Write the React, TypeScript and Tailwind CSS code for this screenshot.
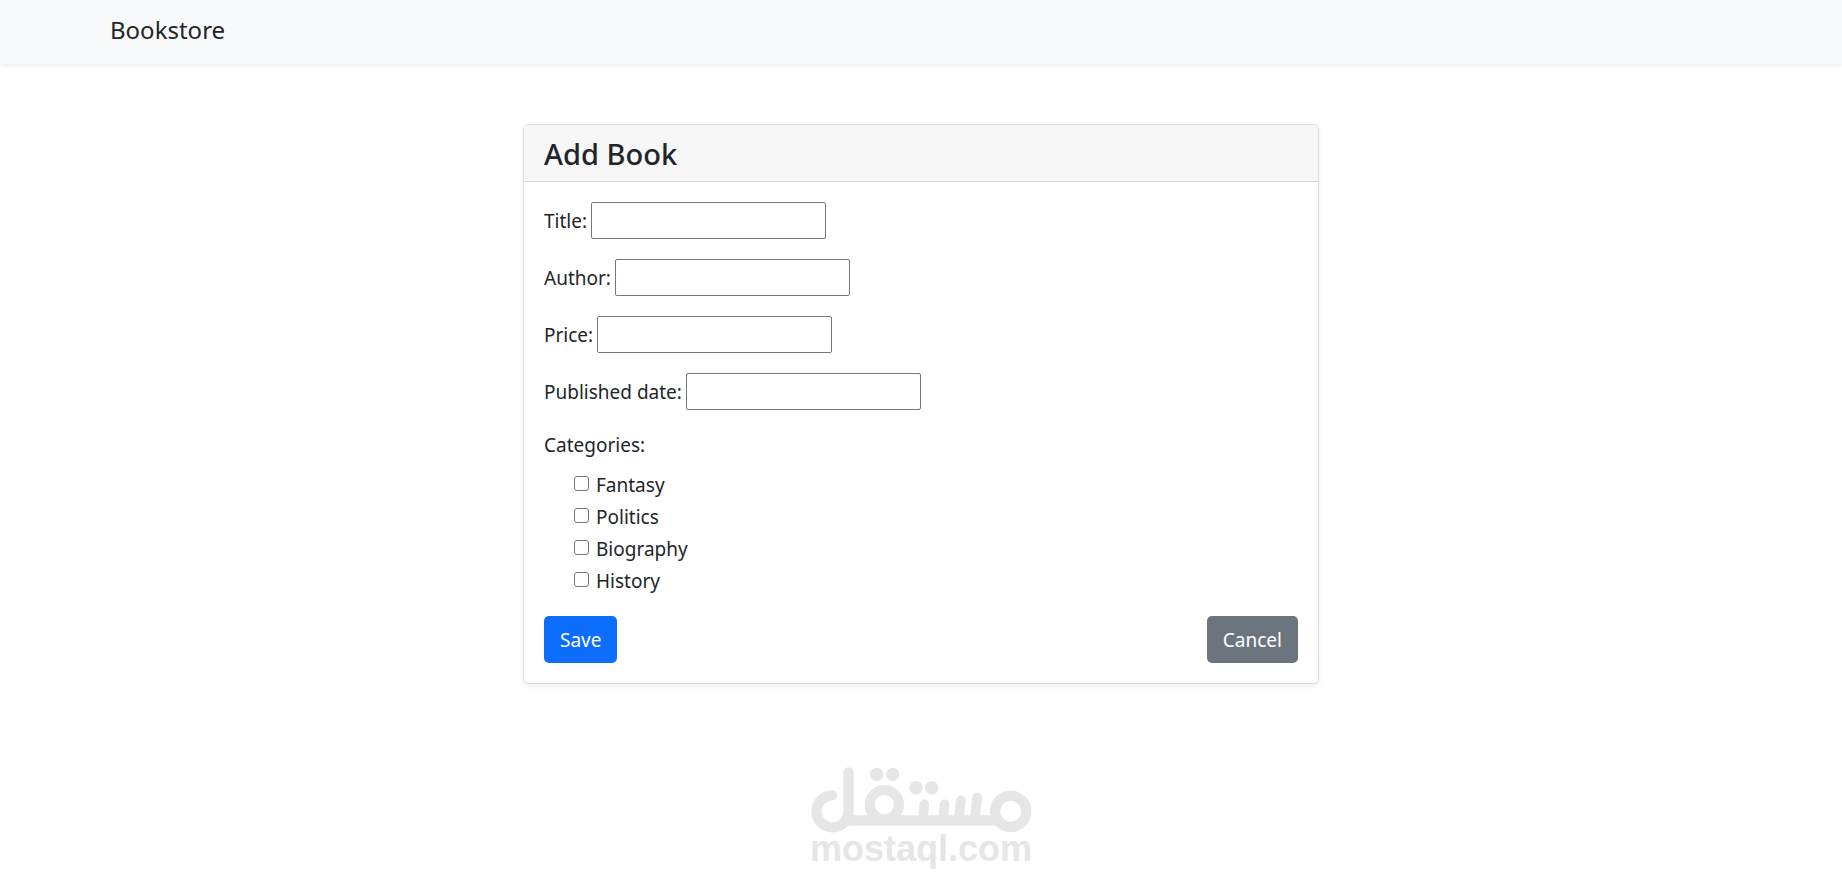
import { useState } from "react";

const fields = [
  { id: "title", label: "Title:" },
  { id: "author", label: "Author:" },
  { id: "price", label: "Price:" },
  { id: "published", label: "Published date:" },
];

const categories = ["Fantasy", "Politics", "Biography", "History"];

function Watermark() {
  return (
    <svg
      viewBox="60 50 663 309"
      className="h-[103px] w-[221px]"
      fill="none"
      stroke="#e6e6e6"
      strokeWidth="31"
      strokeLinecap="round"
      role="img"
      aria-label="مستقل mostaql.com"
    >
      <circle cx="659" cy="183" r="47" />
      <path d="M160 210.500H622" strokeLinecap="butt" />
      <path d="M172.500 66V183A48 48 0 1 1 123 135" />
      <circle cx="280" cy="163" r="44" strokeWidth="30" />
      <path d="M400 162L396 208M461 162L456 208M510 150L503 208M559 142L551 208" strokeWidth="29" />
      <g fill="#e6e6e6" stroke="none">
        <circle cx="257" cy="72" r="20" />
        <circle cx="305" cy="72" r="20" />
        <circle cx="375" cy="112" r="20" />
        <circle cx="422" cy="112" r="20" />
        <text
          x="390"
          y="332"
          textAnchor="middle"
          fontFamily="'Liberation Sans', sans-serif"
          fontWeight="700"
          fontSize="108"
        >
          mostaql.com
        </text>
      </g>
    </svg>
  );
}

export default function App() {
  const [checked, setChecked] = useState<string[]>([]);

  const toggle = (name: string) =>
    setChecked((list) =>
      list.includes(name) ? list.filter((item) => item !== name) : [...list, name],
    );

  return (
    <div className="bg-white font-['Noto_Sans',sans-serif] text-[19px] leading-[30px] text-[#212529]">
      <header className="bg-[#f8f9fa] shadow-[0_2px_5px_rgba(0,0,0,0.075)]">
        <nav className="mx-auto flex h-16 max-w-[1652px] items-start px-[15px] pt-3">
          <a href="#" className="text-2xl leading-9">
            Bookstore
          </a>
        </nav>
      </header>

      <main className="mx-auto flex max-w-[1652px] flex-col items-center pt-[60px]">
        <div className="w-1/2 px-[15px]">
          <section className="rounded-[5px] border border-[#dfdfdf] bg-white shadow-[0_2px_5px_rgba(0,0,0,0.075)]">
            <h1 className="rounded-t-[4px] border-b border-[#d8d8d8] bg-[#f7f7f7] px-5 pt-[11px] pb-[9px] text-[29px] leading-9 font-medium">
              Add Book
            </h1>
            <form className="p-5" onSubmit={(event) => event.preventDefault()}>
              {fields.map((field) => (
                <div key={field.id} className="mb-5 flex items-center gap-1">
                  <label htmlFor={field.id}>{field.label}</label>
                  <input
                    id={field.id}
                    type="text"
                    className="h-[37px] w-[235px] rounded-[2px] border border-[#767676] bg-white px-[2px]"
                  />
                </div>
              ))}
              <fieldset>
                <legend className="mb-[10px]">Categories:</legend>
                <div className="flex flex-col gap-[2px] pl-[30px]">
                  {categories.map((name) => (
                    <label key={name} className="flex items-center gap-[7px]">
                      <input
                        type="checkbox"
                        className="mb-[3px] size-[15px] appearance-none rounded-[3px] border border-[#767676] bg-white checked:border-[#0d6efd] checked:bg-[#0d6efd]"
                        checked={checked.includes(name)}
                        onChange={() => toggle(name)}
                      />
                      {name}
                    </label>
                  ))}
                </div>
              </fieldset>
              <div className="mt-5 flex justify-between">
                <button type="submit" className="h-[47px] rounded-[5px] bg-[#0d6efd] px-4 text-white">
                  Save
                </button>
                <button type="button" className="h-[47px] rounded-[5px] bg-[#6c757d] px-4 text-white">
                  Cancel
                </button>
              </div>
            </form>
          </section>
        </div>
        <div className="mt-[83px]">
          <Watermark />
        </div>
      </main>
    </div>
  );
}
